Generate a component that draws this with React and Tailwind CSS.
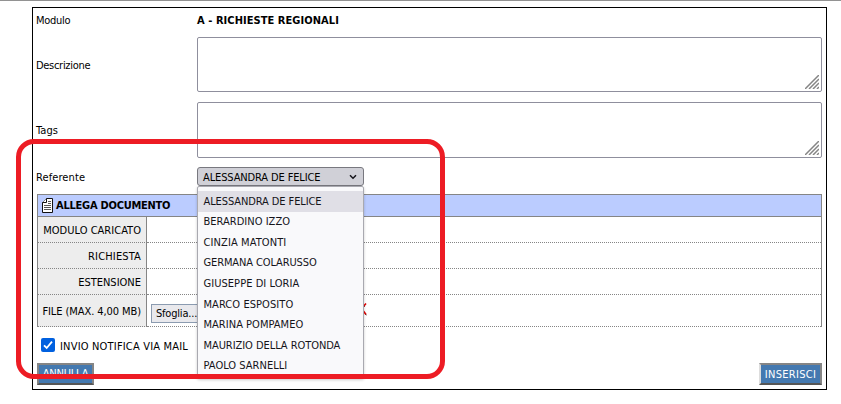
import React from "react";

const people = [
  ["ALESSANDRA DE FELICE", "tracking-[-0.1px]"],
  ["BERARDINO IZZO", "tracking-[0.02px]"],
  ["CINZIA MATONTI", "tracking-[0.1px]"],
  ["GERMANA COLARUSSO", "tracking-[-0.12px]"],
  ["GIUSEPPE DI LORIA", "tracking-[0.05px]"],
  ["MARCO ESPOSITO", "tracking-[0.07px]"],
  ["MARINA POMPAMEO", "tracking-[0.03px]"],
  ["MAURIZIO DELLA ROTONDA", "tracking-[-0.06px]"],
  ["PAOLO SARNELLI", "tracking-[0.02px]"],
];

function Grip() {
  return (
    <svg width="14" height="14" viewBox="0 0 14 14" className="mr-[2px] mb-[2px]" stroke="#858585" strokeWidth="1.5" fill="none">
      <path d="M0 14L14 0M4 14L14 4M8 14L14 8M12 14L14 12" />
    </svg>
  );
}

function Area({ className }) {
  return (
    <div className={`flex w-[625px] items-end justify-end rounded-[2px] border border-[#8f8f9d] bg-white ${className}`}>
      <Grip />
    </div>
  );
}

function DocRow({ label, height, tracking, children }) {
  return (
    <div className={`flex ${height}`}>
      <div className={`flex w-[109px] shrink-0 items-center justify-end border-r border-b border-r-[#858585] border-b-[#858585] [border-bottom-style:dotted] bg-[#ededed] pt-[2px] pr-[5px] ${tracking}`}>
        {label}
      </div>
      <div className="relative flex flex-1 items-end border-b border-dotted border-[#858585]">{children}</div>
    </div>
  );
}

export default function App() {
  return (
    <div className="relative h-[404px] w-[841px] overflow-hidden border-t border-[#929292] bg-white pt-[6px] pl-8 font-['DejaVu_Sans_Condensed','DejaVu_Sans',sans-serif] text-[11px] leading-[14px] whitespace-nowrap text-black [font-stretch:condensed]">
      <div className="flex h-[383px] w-[795px] flex-col border border-black">
        <div className="flex h-[29px] items-center pb-[4px] pl-[3px]">
          <span className="w-[161px] tracking-[-0.3px]">Modulo</span>
          <span className="font-bold tracking-[0.06px]">A - RICHIESTE REGIONALI</span>
        </div>
        <div className="flex h-[55px] items-center pl-[3px]">
          <span className="w-[161px] pt-[2px] tracking-[-0.3px]">Descrizione</span>
          <Area className="h-[55px]" />
        </div>
        <div className="mt-[10px] flex h-[56px] items-center pl-[3px]">
          <span className="w-[161px] pt-[2px] tracking-[0.1px]">Tags</span>
          <Area className="h-[56px]" />
        </div>
        <div className="mt-[9px] flex h-[19px] items-center pl-[3px]">
          <span className="w-[161px] pt-[2px] tracking-[0.1px]">Referente</span>
          <div className="relative flex h-[19px] w-[167px] items-center justify-between rounded-[3px] border border-[#78787f] bg-[#d0d0d7] pr-[6px] pl-[5px]">
            <span className="pt-[2px] tracking-[-0.13px]">ALESSANDRA DE FELICE</span>
            <svg width="8" height="6" viewBox="0 0 8 6" fill="none" stroke="#15141a" strokeWidth="1.5">
              <path d="M1 1.2L4 4.2L7 1.2" />
            </svg>
            <div className="absolute top-[18px] left-[-1px] z-10 h-[193px] w-[167px] rounded-[2px] border border-[#a9a9b0] bg-[#f9f9fb] pt-[4px] text-[#15141a] shadow-[0_1px_3px_rgba(0,0,0,0.2)]">
              {people.map(([name, tracking], i) => (
                <div key={name} className={`flex h-[20.55px] items-center pt-px pl-[5.5px] ${tracking} ${i === 0 ? "bg-[#e0dfe6]" : ""}`}>
                  {name}
                </div>
              ))}
            </div>
          </div>
        </div>
        <div className="mt-[8px] ml-[4px] w-[785px] border-x border-t border-[#858585]">
          <div className="flex h-[22px] items-center border-b border-[#858585] bg-[#bbccff] pl-[4px]">
            <svg width="12" height="16" viewBox="0 0 12 16" fill="#fff" stroke="#111" strokeWidth="1">
              <path d="M4.5 .5H10.5V14.5H.5V4.5Z" />
              <path d="M.5 4.5H4.5V.5" />
              <path d="M6 3.5H9M6 5.5H9M2 7.5H9M2 9.5H9M2 11.5H9" stroke="#555" />
            </svg>
            <span className="ml-[2px] font-bold tracking-[-0.25px]">ALLEGA DOCUMENTO</span>
          </div>
          <DocRow label="MODULO CARICATO" height="h-[26px]" tracking="tracking-[0.03px]" />
          <DocRow label="RICHIESTA" height="h-[26px]" tracking="tracking-[0.15px]" />
          <DocRow label="ESTENSIONE" height="h-[26px]" tracking="tracking-[0px]" />
          <DocRow label="FILE (MAX. 4,00 MB)" height="h-[32px]" tracking="tracking-[-0.08px]">
            <div className="mb-[3px] ml-[4px] flex h-[19px] w-[56px] items-center border border-[#8b9bb0] bg-[#e9e9ed] pt-px pl-[4px] tracking-[-0.2px]">
              Sfoglia...
            </div>
            <svg width="12" height="14" viewBox="0 0 12 14" className="mb-[10px] ml-[148px]" strokeWidth="1.6" fill="none">
              <path d="M8 5L11 1.5M8 8.5L11 12.5" stroke="#e00000" />
              <path d="M8.5 5.5L9.5 4.5M10.7 12.3L11.6 13.3" stroke="#300" strokeWidth="1" />
            </svg>
          </DocRow>
        </div>
        <div className="mt-[11px] ml-[8px] flex h-[14px] items-center">
          <div className="flex h-[14px] w-[14px] items-center justify-center rounded-[2px] bg-[#0060df]">
            <svg width="12" height="12" viewBox="0 0 12 12" fill="none" stroke="#fff" strokeWidth="1.8">
              <path d="M2 6.3L4.7 9L10 2.7" />
            </svg>
          </div>
          <span className="ml-[5px] pt-[3px] tracking-[0.18px]">INVIO NOTIFICA VIA MAIL</span>
        </div>
        <div className="mt-[11px] mr-[4px] ml-[4px] flex justify-between text-white">
          <div className="flex h-[22px] w-[57px] items-center justify-center border-2 border-[#858585] border-b-[#555] bg-[#4479b0] tracking-[-0.2px]">ANNULLA</div>
          <div className="flex h-[22px] w-[63px] items-center justify-center border-2 border-t-[#858585] border-r-[#858585] border-b-[#555] border-l-[#ddd] bg-[#4479b0] pt-px tracking-[0.3px]">INSERISCI</div>
        </div>
      </div>
      <div className="absolute top-[138px] left-[16px] z-20 h-[240px] w-[429px] rounded-[18px] border-[5px] border-[#ed1c24]" />
    </div>
  );
}
